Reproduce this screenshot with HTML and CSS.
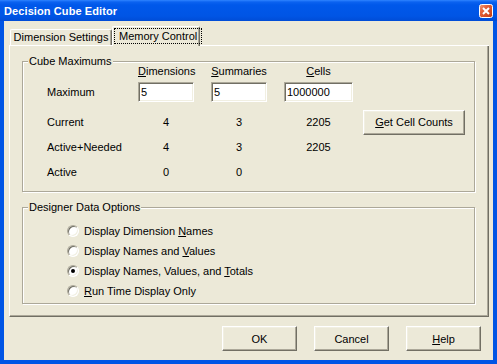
FILE: index.html
```html
<!DOCTYPE html>
<html lang="en">

<head>
    <meta charset="UTF-8">
    <title>Decision Cube Editor</title>
    <link rel="stylesheet" href="styles.css">
</head>

<body>
    <div class="window">
        <div class="caption">
            <span class="caption-text">Decision Cube Editor</span>
            <span class="btn-close">
                <svg width="14" height="14" viewBox="0 0 14 14">
                    <defs>
                        <linearGradient id="cg" x1="0" y1="0" x2="1" y2="1">
                            <stop offset="0" stop-color="#f0a080"/>
                            <stop offset="0.35" stop-color="#e5633b"/>
                            <stop offset="1" stop-color="#c23a12"/>
                        </linearGradient>
                    </defs>
                    <rect x="0.5" y="0.5" width="13" height="13" rx="2" fill="url(#cg)" stroke="#fff"/>
                    <path d="M4 4L10 10M10 4L4 10" stroke="#fff" stroke-width="2"/>
                </svg>
            </span>
        </div>
        <div class="client">
            <div class="tabs">
                <div class="tab">Dimension Settings</div>
                <div class="tab active"><span class="focus">Memory Control</span></div>
            </div>
            <div class="page">
                <div class="group">
                    <div class="group-title">Cube Maximums</div>
                    <div class="grid">
                        <span></span>
                        <span class="head"><u>D</u>imensions</span>
                        <span class="head"><u>S</u>ummaries</span>
                        <span class="head"><u>C</u>ells</span>
                        <span></span>

                        <span class="lbl max">Maximum</span>
                        <input class="edit" type="text" value="5">
                        <input class="edit" type="text" value="5">
                        <input class="edit" type="text" value="1000000">
                        <span></span>

                        <span class="lbl">Current</span>
                        <span class="num">4</span>
                        <span class="num">3</span>
                        <span class="num">2205</span>
                        <button class="btn get"><u>G</u>et Cell Counts</button>

                        <span class="lbl">Active+Needed</span>
                        <span class="num">4</span>
                        <span class="num">3</span>
                        <span class="num">2205</span>
                        <span></span>

                        <span class="lbl">Active</span>
                        <span class="num">0</span>
                        <span class="num">0</span>
                        <span></span>
                        <span></span>
                    </div>
                </div>
                <div class="group options">
                    <div class="group-title">Designer Data Options</div>
                    <ul class="radios">
                        <li class="opt"><span class="radio"></span><span>Display Dimension <u>N</u>ames</span></li>
                        <li class="opt"><span class="radio"></span><span>Display Names and <u>V</u>alues</span></li>
                        <li class="opt"><span class="radio checked"></span><span>Display Names, Values, and <u>T</u>otals</span></li>
                        <li class="opt"><span class="radio"></span><span><u>R</u>un Time Display Only</span></li>
                    </ul>
                </div>
            </div>
            <div class="actions">
                <button class="btn">OK</button>
                <button class="btn">Cancel</button>
                <button class="btn"><u>H</u>elp</button>
            </div>
        </div>
    </div>
</body>

</html>
```

FILE: styles.css
```css
* {
    box-sizing: border-box;
}

html,
body {
    margin: 0;
    padding: 0;
}

body {
    font: 11px "Liberation Sans", Arial, sans-serif;
    color: #000;
    background: #0055e5;
}

.window {
    width: 497px;
    height: 364px;
    display: flex;
    flex-direction: column;
    background: #0055e5;
}

/* title bar */
.caption {
    height: 21px;
    flex: none;
    display: flex;
    align-items: center;
    justify-content: space-between;
    padding: 0 4px 0 4px;
    color: #fff;
    font-weight: bold;
    background: linear-gradient(to bottom, #2f84ff 0, #0b62f0 2px, #0058ea 5px, #0055e5 16px, #004cd6 21px);
}

.caption-text {
    line-height: 13px;
    padding-top: 1px;
    letter-spacing: 0.1px;
}

.btn-close {
    display: flex;
    width: 14px;
    height: 14px;
}

/* dialog body */
.client {
    flex: 1;
    margin: 0 4px 4px 4px;
    padding: 5px 4px 7px 5px;
    background: #ece9d8;
}

.tabs {
    display: flex;
    align-items: flex-end;
    height: 20px;
    padding-left: 1px;
    border-bottom: 1px solid #fff;
}

.tab {
    width: 102px;
    height: 16px;
    line-height: 14px;
    text-align: center;
    white-space: nowrap;
    border-top: 1px solid #fff;
    border-left: 1px solid #fff;
    border-right: 1px solid #716f64;
    border-radius: 2px 2px 0 0;
    box-shadow: inset -1px 0 #aca899;
}

.tab.active {
    width: 88px;
    height: 20px;
    margin-bottom: -1px;
    padding: 1px 0 0 1px;
    text-align: left;
    background: #ece9d8;
}

.focus {
    display: inline-block;
    line-height: 14px;
    padding: 0 4px;
    border: 1px dotted #000;
}

.page {
    padding: 15px 13px 12px 12px;
    border-left: 1px solid #fff;
    border-right: 1px solid #716f64;
    border-bottom: 1px solid #716f64;
    box-shadow: inset -1px -1px #aca899;
}

/* etched group boxes */
.group {
    border: 1px solid #aca899;
    box-shadow: inset 1px 1px #fff, 1px 1px #fff;
    padding-bottom: 6px;
}

.group + .group {
    margin-top: 15px;
}

.group-title {
    display: table;
    margin: -7px 0 0 5px;
    padding: 0 1px;
    line-height: 13px;
    background: #ece9d8;
}

.grid {
    display: grid;
    grid-template-columns: 74px 56px 56px 69px 102px;
    grid-template-rows: 17px 28px 25px 25px 25px;
    column-gap: 17px;
    margin: -3px 0 0 24px;
    line-height: 13px;
}

.head {
    align-self: start;
    text-align: center;
    white-space: nowrap;
}

.lbl {
    align-self: center;
    white-space: nowrap;
}

.lbl.max {
    align-self: start;
    line-height: 20px;
}

.num {
    align-self: center;
    text-align: center;
}

.edit {
    align-self: start;
    width: 100%;
    height: 20px;
    margin: 0;
    padding: 0 2px;
    font: inherit;
    color: #000;
    background: #fff;
    border: 1px solid;
    border-color: #aca899 #fff #fff #aca899;
    box-shadow: inset 1px 1px #716f64, inset -1px -1px #f1efe2;
    outline: none;
}

.btn {
    width: 75px;
    height: 25px;
    margin: 0;
    padding: 0;
    font: inherit;
    color: #000;
    background: #ece9d8;
    border: 1px solid;
    border-color: #fff #716f64 #716f64 #fff;
    box-shadow: inset -1px -1px #aca899, inset 1px 1px #f1efe2;
}

.btn.get {
    width: 102px;
    margin-left: -7px;
}

/* radio list */
.options {
    padding-bottom: 2px;
}

.radios {
    margin: 7px 0 0 0;
    padding: 0 0 0 44px;
    list-style: none;
}

.opt {
    display: flex;
    align-items: center;
    gap: 5px;
    height: 20px;
    white-space: nowrap;
}

.radio {
    position: relative;
    width: 12px;
    height: 12px;
    flex: none;
    border-radius: 50%;
    background: #fff;
    border: 1px solid;
    border-color: #aca899 #fff #fff #aca899;
    box-shadow: inset 1px 1px #716f64, inset -1px -1px #f1efe2;
}

.radio.checked::after {
    content: "";
    position: absolute;
    left: 3px;
    top: 3px;
    width: 4px;
    height: 4px;
    border-radius: 50%;
    background: #000;
}

.actions {
    display: flex;
    justify-content: flex-end;
    gap: 17px;
    margin-top: 9px;
    padding-right: 8px;
}
```
